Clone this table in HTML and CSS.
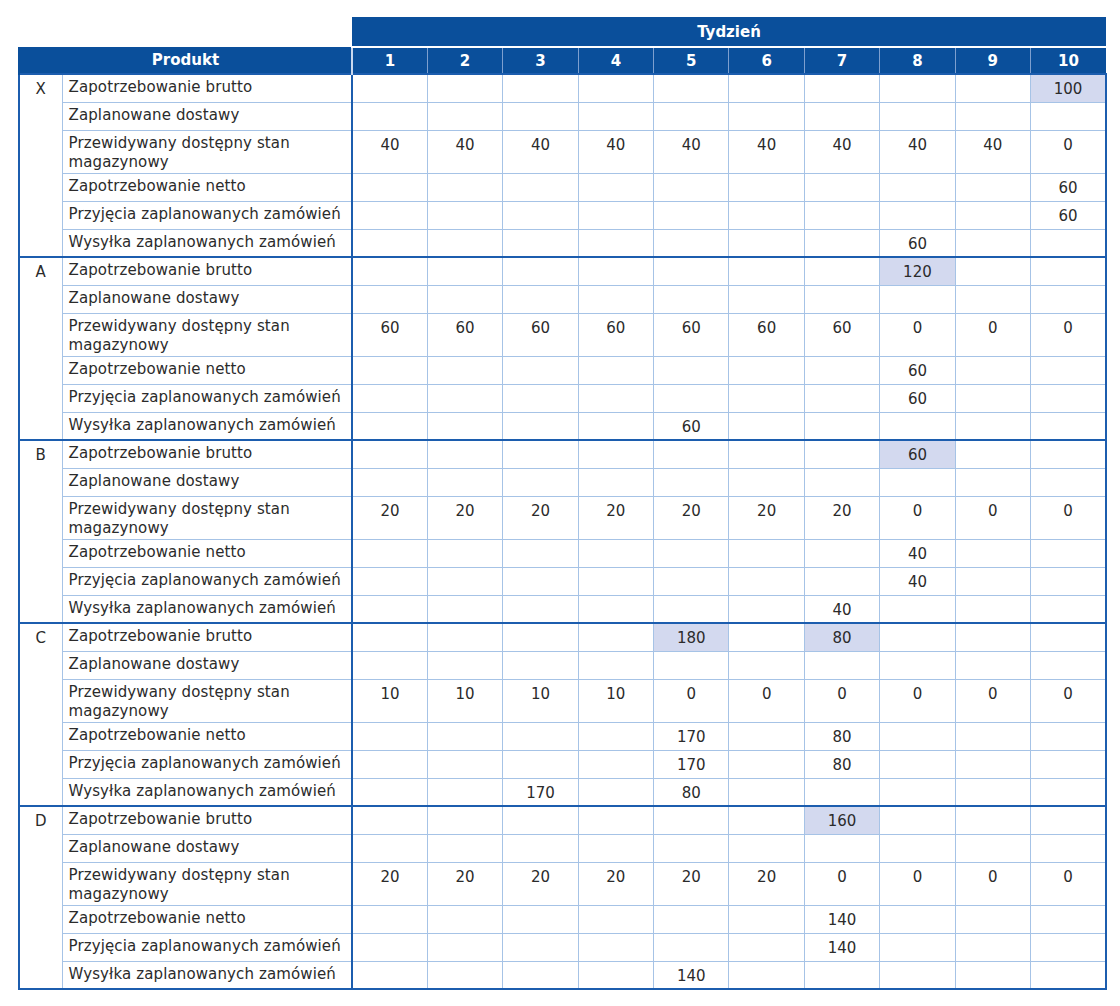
FILE: index.html
```html
<!DOCTYPE html>
<html lang="pl">
<head>
<meta charset="utf-8">
<title>MRP</title>
<link rel="stylesheet" href="styles.css">
</head>
<body>
<table class="mrp">
<colgroup>
<col class="c-prod"><col class="c-label">
<col class="c-wk"><col class="c-wk"><col class="c-wk"><col class="c-wk"><col class="c-wk">
<col class="c-wk"><col class="c-wk"><col class="c-wk"><col class="c-wk"><col class="c-wk">
</colgroup>
<thead>
<tr class="h-top"><th class="blank" colspan="2"></th><th class="tydz" colspan="10">Tydzień</th></tr>
<tr class="h-sub"><th class="prod-h" colspan="2">Produkt</th><th class="wk first">1</th><th class="wk">2</th><th class="wk">3</th><th class="wk">4</th><th class="wk">5</th><th class="wk">6</th><th class="wk">7</th><th class="wk">8</th><th class="wk">9</th><th class="wk">10</th></tr>
</thead>
<tbody id="body"></tbody>
</table>
<script src="app.js"></script>
</body>
</html>
```
FILE: app.js
```js
const labels = [
  "Zapotrzebowanie brutto",
  "Zaplanowane dostawy",
  "Przewidywany dostępny stan magazynowy",
  "Zapotrzebowanie netto",
  "Przyjęcia zaplanowanych zamówień",
  "Wysyłka zaplanowanych zamówień"
];
const data = [
  {p:"X", hl:[10], rows:[{10:100},{},{1:40,2:40,3:40,4:40,5:40,6:40,7:40,8:40,9:40,10:0},{10:60},{10:60},{8:60}]},
  {p:"A", hl:[8], rows:[{8:120},{},{1:60,2:60,3:60,4:60,5:60,6:60,7:60,8:0,9:0,10:0},{8:60},{8:60},{5:60}]},
  {p:"B", hl:[8], rows:[{8:60},{},{1:20,2:20,3:20,4:20,5:20,6:20,7:20,8:0,9:0,10:0},{8:40},{8:40},{7:40}]},
  {p:"C", hl:[5,7], rows:[{5:180,7:80},{},{1:10,2:10,3:10,4:10,5:0,6:0,7:0,8:0,9:0,10:0},{5:170,7:80},{5:170,7:80},{3:170,5:80}]},
  {p:"D", hl:[7], rows:[{7:160},{},{1:20,2:20,3:20,4:20,5:20,6:20,7:0,8:0,9:0,10:0},{7:140},{7:140},{5:140}]}
];
const tb = document.getElementById("body");
let html = "";
data.forEach(g => {
  g.rows.forEach((r, i) => {
    const cls = ["row"];
    if (i === 0) cls.push("grp-first");
    if (i === 2) cls.push("tall");
    html += `<tr class="${cls.join(" ")}">`;
    if (i === 0) html += `<td class="prod" rowspan="6">${g.p}</td>`;
    html += `<td class="label">${labels[i]}</td>`;
    for (let w = 1; w <= 10; w++) {
      const v = r[w];
      const c = ["num"];
      if (w === 1) c.push("first");
      if (i === 0 && g.hl.includes(w)) c.push("hl");
      html += `<td class="${c.join(" ")}">${v === undefined ? "" : v}</td>`;
    }
    html += `</tr>`;
  });
});
tb.innerHTML = html;
```
FILE: styles.css
```css
html, body { background: #fff; }
body {
  margin: 17px 0 0 18px;
  font-family: "DejaVu Sans", "Liberation Sans", sans-serif;
  color: #2b2b2b;
}
.mrp {
  border-collapse: collapse;
  table-layout: fixed;
  width: 1087px;
}
.c-prod { width: 43px; }
.c-label { width: 290px; }
.c-wk { width: 75.4px; }

.h-top th, .h-sub th {
  background: #0a4f9b;
  color: #fff;
  font-weight: bold;
  font-size: 15px;
  padding: 0;
  text-align: center;
}
.h-top { height: 30px; }
.h-top th { border-bottom: 2px solid #fff; }
.h-top th.blank { background: transparent; border: none; }
.h-sub { height: 27px; }
.h-sub th.wk { border-left: 1px solid #7d9fcf; }
.h-sub th.wk.first { border-left: 2px solid #c9d8ee; }
.h-sub .prod-h { border-left: 2px solid #0a4f9b; }

td {
  padding: 0;
  height: 0;
  font-size: 15px;
  line-height: 19px;
  vertical-align: top;
  border: 1px solid #a6c3e6;
}
tr.row { height: 28px; }
tr.row.tall { height: 43px; }
td.label { padding: 3px 6px 0 6px; letter-spacing: 0.12px; }
td.prod {
  text-align: center;
  padding-top: 5px;
  border-left: 2px solid #1c5dae;
  border-bottom: 2px solid #1c5dae;
}
td.num { text-align: center; padding-top: 5px; }
td.num.first { border-left: 2px solid #1c5dae; }
td.num:last-child { border-right: 2px solid #1c5dae; }
tr.grp-first td { border-top: 2px solid #1c5dae; }
tbody tr:last-child td { border-bottom: 2px solid #1c5dae; }
td.hl { background: #d3d9ef; }
```
